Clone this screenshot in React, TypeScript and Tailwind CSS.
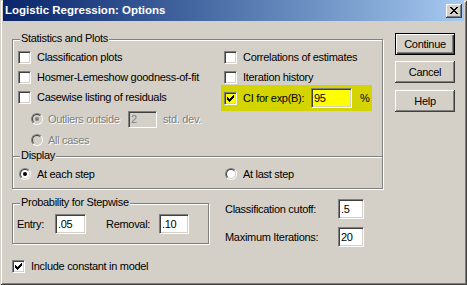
import type { ReactNode } from 'react'

// Win classic "Logistic Regression: Options" dialog

const sunken =
  'border border-t-[#808080] border-l-[#808080] border-b-white border-r-white shadow-[inset_1px_1px_0_#404040,inset_-1px_-1px_0_#d4d0c8]'
const raised =
  'shadow-[inset_-1px_-1px_0_#404040,inset_1px_1px_0_#fff,inset_-2px_-2px_0_#808080,inset_2px_2px_0_#d4d0c8]'
const etched = 'border border-[#808080] shadow-[inset_1px_1px_0_#fff,1px_1px_0_#fff]'
const disabledText = 'text-[#808080] [text-shadow:1px_1px_0_#fff]'

export default function App() {
  return (
    <div className="w-[467px] h-[285px] bg-[#d4d0c8] flex flex-col px-[3px] pb-[3px] overflow-hidden select-none font-['Liberation_Sans',Arial,sans-serif] text-[11px] leading-[13px] tracking-[-0.3px] text-black shadow-[inset_1px_1px_0_#d4d0c8,inset_-1px_-1px_0_#404040,inset_2px_2px_0_#fff,inset_-2px_-2px_0_#808080]">
      <div className="h-[21px] shrink-0 flex items-center justify-between px-[2px] bg-linear-to-r from-[#0a246a] to-[#a6caf0]">
        <span className="text-white font-bold text-[11.5px] tracking-normal">Logistic Regression: Options</span>
        <div className={`w-[16px] h-[14px] bg-[#d4d0c8] flex items-center justify-center ${raised}`}>
          <svg width="8" height="7" viewBox="0 0 8 7" shapeRendering="crispEdges">
            <path
              fill="#000"
              d="M0 0h2v1H0zM6 0h2v1H6zM1 1h2v1H1zM5 1h2v1H5zM2 2h4v1H2zM3 3h2v1H3zM2 4h4v1H2zM1 5h2v1H1zM5 5h2v1H5zM0 6h2v1H0zM6 6h2v1H6z"
            />
          </svg>
        </div>
      </div>

      <div className="flex pl-[9px] pt-[12px] gap-[12px]">
        <div className="w-[371px] mt-[6px] flex flex-col">
          {/* Statistics and Plots + Display */}
          <div className={`relative h-[150px] flex flex-col ${etched}`}>
            <Legend>Statistics and Plots</Legend>
            <div className="pl-[5px] pt-[7px] flex flex-col">
              <div className="flex h-[20px] items-center">
                <Opt className="w-[206px]" box={<Check />}>Classification plots</Opt>
                <Opt box={<Check />}>Correlations of estimates</Opt>
              </div>
              <div className="flex h-[20px] items-center">
                <Opt className="w-[206px]" box={<Check />}>Hosmer-Lemeshow goodness-of-fit</Opt>
                <Opt box={<Check />}>Iteration history</Opt>
              </div>
              <div className="flex h-[20px] items-start">
                <Opt className="w-[206px] h-[20px]" box={<Check />}>Casewise listing of residuals</Opt>
                <div className="-ml-[3px] pl-[3px] -mt-[2px] w-[151px] h-[26px] bg-[#d4d400] flex items-center">
                  <Check checked yellow />
                  <span className="ml-[6px] w-[68px]">CI for exp(B):</span>
                  <Field className="w-[41px] bg-[#ffff00]">95</Field>
                  <span className="ml-[8px]">%</span>
                </div>
              </div>
              <div className={`flex h-[20px] items-center mt-[2px] pl-[13px] ${disabledText}`}>
                <Radio on disabled />
                <span className="ml-[5px] w-[80px]">Outliers outside</span>
                <div className={`w-[29px] h-[17px] bg-[#d4d0c8] pl-[2px] flex items-center [text-shadow:none] ${sunken}`}>2</div>
                <span className="ml-[6px]">std. dev.</span>
              </div>
              <div className={`flex h-[20px] items-center mt-[1px] pl-[13px] ${disabledText}`}>
                <Radio disabled />
                <span className="ml-[5px]">All cases</span>
              </div>
            </div>
            <div className="relative mt-[6px] border-t border-[#808080] shadow-[inset_0_1px_0_#fff] pt-[7px] pl-[6px] flex">
              <Legend>Display</Legend>
              <div className="flex h-[20px] items-center">
                <Opt className="w-[206px]" box={<Radio on />}>At each step</Opt>
                <Opt box={<Radio />}>At last step</Opt>
              </div>
            </div>
          </div>

          <div className="flex items-start">
            <div className={`relative mt-[14px] w-[197px] h-[41px] pl-[4px] pt-[10px] flex items-start ${etched}`}>
              <Legend>Probability for Stepwise</Legend>
              <span className="w-[38px] h-[20px] flex items-center">Entry:</span>
              <Field className="w-[31px]">.05</Field>
              <span className="ml-[20px] w-[53px] h-[20px] flex items-center">Removal:</span>
              <Field className="w-[30px]">.10</Field>
            </div>
            <div className="ml-[16px] mt-[10px] flex flex-col">
              <div className="flex items-center">
                <span className="w-[113px]">Classification cutoff:</span>
                <Field className="w-[26px]">.5</Field>
              </div>
              <div className="flex items-center mt-[8px]">
                <span className="w-[113px]">Maximum Iterations:</span>
                <Field className="w-[26px]">20</Field>
              </div>
            </div>
          </div>

          <div className="mt-[9px] h-[20px] flex items-center">
            <Opt box={<Check checked />}>Include constant in model</Opt>
          </div>
        </div>

        <div className="w-[60px] flex flex-col">
          <div className="h-[22px] border border-black shadow-[inset_1px_1px_0_#fff,inset_-1px_-1px_0_#404040,inset_-2px_-2px_0_#808080] flex items-center justify-center">
            Continue
          </div>
          <Btn className="mt-[6px]">Cancel</Btn>
          <Btn className="mt-[7px]">Help</Btn>
        </div>
      </div>
    </div>
  )
}

function Legend({ children }: { children: ReactNode }) {
  return (
    <span className="absolute -top-[8px] left-[7px] px-[1px] bg-[#d4d0c8] leading-[13px]">{children}</span>
  )
}

function Opt({ box, children, className = '' }: { box: ReactNode; children: ReactNode; className?: string }) {
  return (
    <div className={`flex items-center gap-[6px] ${className}`}>
      {box}
      <span>{children}</span>
    </div>
  )
}

function Check({ checked, yellow }: { checked?: boolean; yellow?: boolean }) {
  return (
    <div
      className={`w-[13px] h-[13px] shrink-0 flex items-center justify-center ${yellow ? 'bg-[#ffff00]' : 'bg-white'} ${sunken}`}
    >
      {checked && (
        <svg width="7" height="7" viewBox="0 0 7 7" shapeRendering="crispEdges">
          <path
            fill="#000"
            d="M6 0h1v1H6zM5 1h2v1H5zM0 2h1v1H0zM4 2h3v1H4zM0 3h2v1H0zM3 3h3v1H3zM0 4h5v1H0zM1 5h3v1H1zM2 6h1v1H2z"
          />
        </svg>
      )}
    </div>
  )
}

function Radio({ on, disabled }: { on?: boolean; disabled?: boolean }) {
  return (
    <div className="w-[12px] h-[12px] shrink-0 rounded-full border border-t-[#808080] border-l-[#808080] border-b-white border-r-white">
      <div
        className={`w-full h-full rounded-full border border-t-[#404040] border-l-[#404040] border-b-[#d4d0c8] border-r-[#d4d0c8] flex items-center justify-center ${disabled ? 'bg-[#d4d0c8]' : 'bg-white'}`}
      >
        {on && <div className={`w-[4px] h-[4px] rounded-full ${disabled ? 'bg-[#808080]' : 'bg-black'}`} />}
      </div>
    </div>
  )
}

function Field({ children, className = '' }: { children: ReactNode; className?: string }) {
  return (
    <div className={`h-[20px] shrink-0 flex items-center pl-[2px] ${className.includes('bg-') ? '' : 'bg-white'} ${sunken} ${className}`}>
      {children}
    </div>
  )
}

function Btn({ children, className = '' }: { children: ReactNode; className?: string }) {
  return <div className={`h-[22px] flex items-center justify-center ${raised} ${className}`}>{children}</div>
}
